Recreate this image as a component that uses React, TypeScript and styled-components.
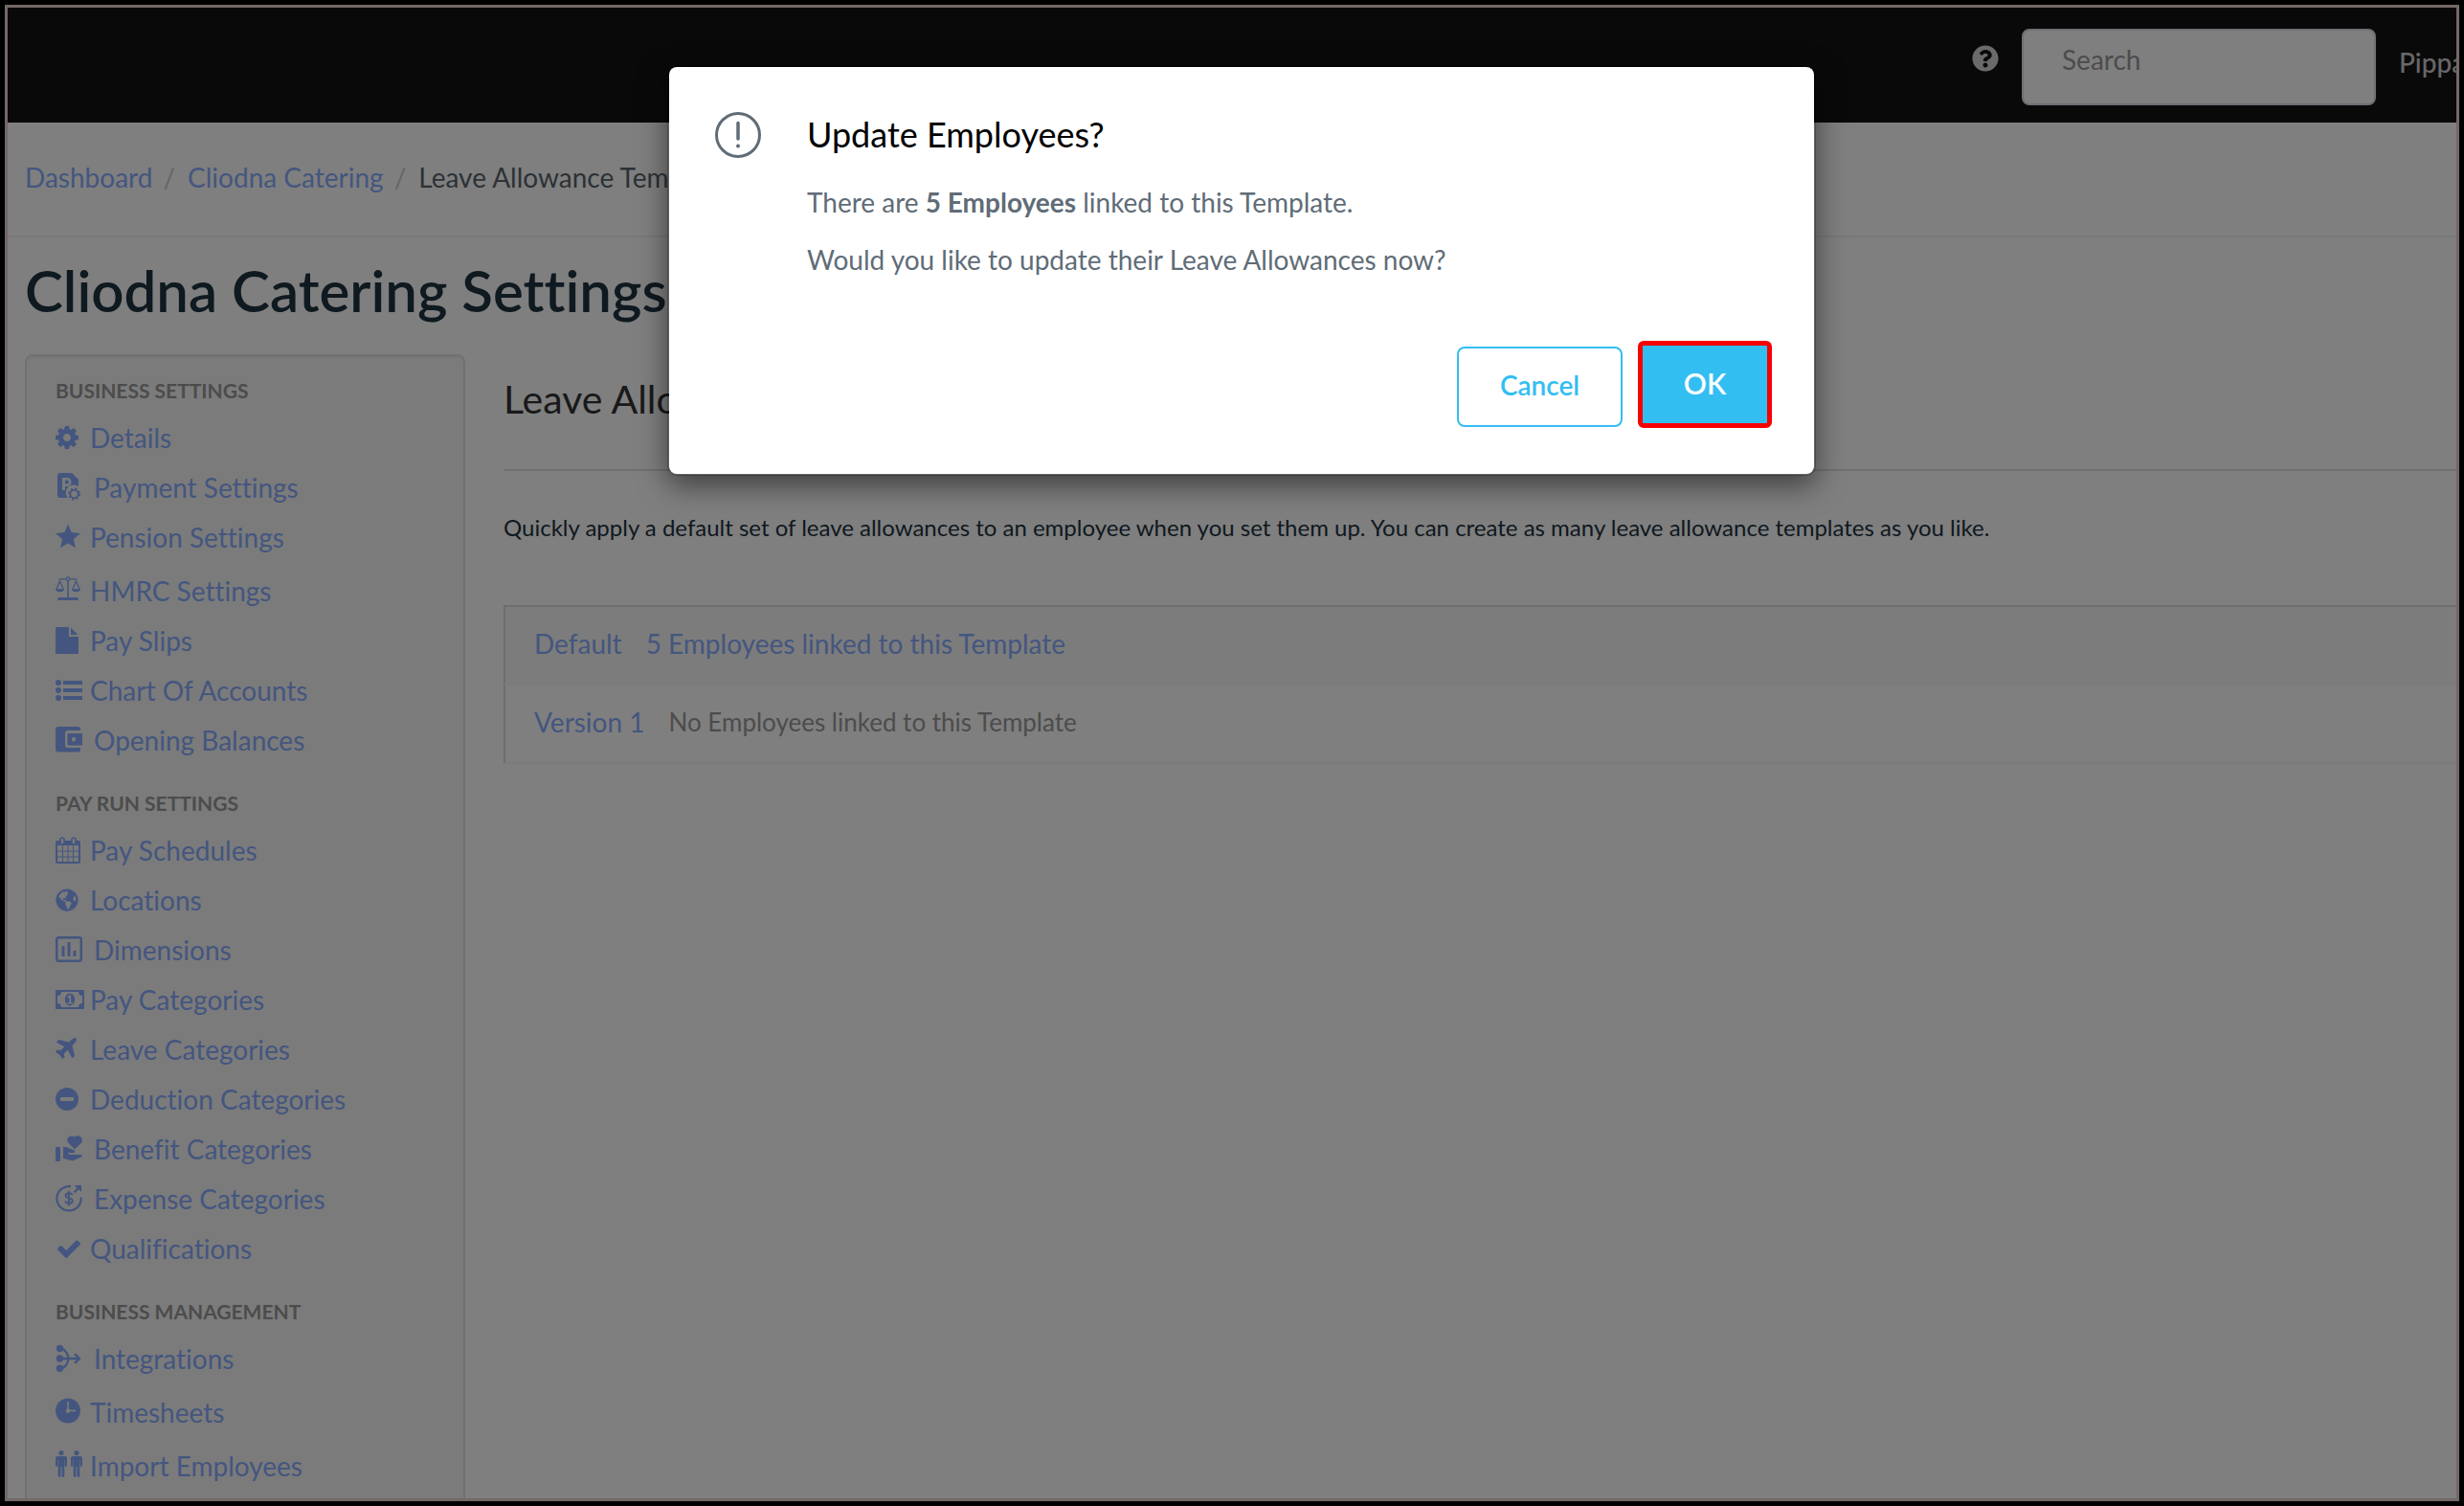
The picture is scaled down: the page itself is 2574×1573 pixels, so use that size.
import React from "react";
import styled, { createGlobalStyle } from "styled-components";
import { FaGlobeAmericas, FaQuestionCircle } from "react-icons/fa";

const link = "#88acff";
const ink = "#1e3240";
const sky = "#33bef2";

const GlobalStyle = createGlobalStyle`
  *, *::before, *::after { box-sizing: border-box; }
  body {
    margin: 0;
    background: #000;
    font-family: Lato, "Open Sans", sans-serif;
    font-size: 28px;
    font-variant-ligatures: none;
  }
  h1, h2, h3, p, ul, ol { margin: 0; padding: 0; font-weight: 400; }
  ul, ol { list-style: none; }
  button, input { font: inherit; }
`;

/* ---------- shell ---------- */

const Frame = styled.div`
  height: 100vh;
  padding: 5px;
  background: #000;
`;

const Screen = styled.div`
  position: relative;
  height: 100%;
  overflow: hidden;
  border: 3px solid #736866;
  background: #fff;
`;

const TopBar = styled.header`
  display: flex;
  justify-content: flex-end;
  align-items: flex-start;
  height: 120px;
  background: #141213;
`;

const HelpButton = styled.button`
  display: flex;
  margin: 39px 24px 0 0;
  padding: 0;
  border: 0;
  background: none;
  color: #d4d4d4;
  font-size: 28px;
`;

const SearchBox = styled.input`
  width: 370px;
  height: 80px;
  margin-top: 22px;
  padding: 0 40px 16px;
  border: 2px solid #d8dfe6;
  border-radius: 8px;
  background: #fff;
  &::placeholder { color: #999; opacity: 1; }
`;

const UserName = styled.span`
  width: 60px;
  margin: 36px 0 0 24px;
  overflow: hidden;
  color: #d0d0d0;
  line-height: 42px;
  font-weight: 500;
  white-space: nowrap;
`;

/* ---------- breadcrumb and title ---------- */

const Crumbs = styled.nav`
  padding: 0 18px 4px;
  border-bottom: 2px solid #f0f3f4;
  line-height: 114px;
  color: #58646c;
  ol { display: flex; }
  li + li::before { content: "/"; padding: 0 13px 0 11px; color: #ccc; }
`;

const TextLink = styled.a`
  color: ${link};
  text-decoration: none;
`;

const PageTitle = styled.h1`
  padding: 20px 18px 32px;
  color: ${ink};
  font-size: 60px;
  font-weight: 600;
  line-height: 70px;
`;

const Columns = styled.div`
  display: grid;
  grid-template-columns: 460px 1fr;
  gap: 40px;
  padding-left: 18px;
`;

/* ---------- side menu ---------- */

const Well = styled.nav`
  padding: 20px 30px 38px;
  border: 2px solid #e3e3e3;
  border-radius: 8px;
  background: #f7f7f7;
  box-shadow: inset 0 2px 2px rgba(0, 0, 0, 0.05);
`;

const Group = styled.section`
  & + & { margin-top: 24px; }
`;

const GroupTitle = styled.h3`
  margin-bottom: 7px;
  color: #999;
  font-size: 21px;
  font-weight: 700;
  line-height: 32px;
`;

const MenuLink = styled.a<{ $loose?: boolean; $inset?: boolean }>`
  display: flex;
  align-items: center;
  gap: ${(p) => (p.$inset ? 8 : 4)}px;
  padding-top: ${(p) => (p.$loose ? 4 : 0)}px;
  color: ${link};
  line-height: 52px;
  text-decoration: none;
  white-space: nowrap;
`;

const Glyph = styled.svg`
  flex: none;
  width: 32px;
  height: 28px;
  overflow: visible;
  fill: currentColor;
`;

/* ---------- main column ---------- */

const SectionTitle = styled.h2`
  padding-bottom: 26px;
  border-bottom: 2px solid #e0e0e0;
  color: #333;
  font-size: 41px;
  line-height: 94px;
`;

const Intro = styled.p`
  margin: 41px 0 63px;
  color: ${ink};
  font-size: 24px;
  line-height: 36px;
`;

const Templates = styled.ul`
  border-top: 2px solid #ddd;
  line-height: 76px;
`;

const TemplateRow = styled.li<{ $striped?: boolean }>`
  display: flex;
  gap: 25px;
  padding: 0 30px 4px;
  border-left: 2px solid #ddd;
  border-bottom: 2px solid #f6f6f6;
  background: ${(p) => (p.$striped ? "#f9f9f9" : "#fff")};
`;

const Muted = styled.span`
  color: #999;
  font-size: 26px;
`;

/* ---------- dialog ---------- */

const Backdrop = styled.div`
  position: absolute;
  inset: 0;
  display: flex;
  justify-content: center;
  align-items: flex-start;
  padding: 60px 0 0 20px;
  background: rgba(0, 0, 0, 0.5);
`;

const Dialog = styled.section`
  display: grid;
  grid-template-columns: 48px 1fr;
  column-gap: 48px;
  width: 1200px;
  padding: 47px 44px 48px 48px;
  border: 2px solid rgba(0, 0, 0, 0.2);
  border-radius: 10px;
  background: #fff;
  background-clip: padding-box;
  box-shadow: 0 10px 30px rgba(0, 0, 0, 0.5);
  color: #606c77;
  line-height: 40px;
`;

const DialogTitle = styled.h2`
  margin-bottom: 28px;
  color: #000;
  font-size: 36px;
  line-height: 46px;
`;

const Message = styled.p`
  & + & { margin-top: 20px; }
`;

const Actions = styled.div`
  grid-column: 1 / -1;
  display: flex;
  justify-content: flex-end;
  align-items: flex-end;
  gap: 16px;
  margin-top: 65px;
`;

const CancelButton = styled.button`
  width: 173px;
  height: 84px;
  margin-bottom: 1px;
  padding: 0 0 4px;
  border: 2px solid ${sky};
  border-radius: 8px;
  background: #fff;
  color: ${sky};
  font-weight: 600;
`;

const OkButton = styled.button`
  width: 140px;
  height: 91px;
  padding: 0 0 4px;
  border: 5px solid #f60000;
  border-radius: 6px;
  background: ${sky};
  color: #fff;
  font-size: 30px;
  font-weight: 600;
`;

/* ---------- icons, drawn on a 32 x 28 grid ---------- */

const line = { fill: "none", stroke: "currentColor" };

const icons: Record<string, React.ReactNode> = {
  cog: (
    <svg x="0" y="3" width="24" height="24" viewBox="128 128 1536 1536">
      <path d="M1152 896q0-106-75-181t-181-75-181 75-75 181 75 181 181 75 181-75 75-181zm512-109v222q0 12-8 23t-20 13l-185 28q-19 54-39 91 35 50 107 138 10 12 10 25t-9 23q-27 37-99 108t-94 71q-12 0-26-9l-138-108q-44 23-91 38-16 136-29 186-7 28-36 28h-222q-14 0-24.5-8.5t-11.5-21.5l-28-184q-49-16-90-37l-141 107q-10 9-25 9-14 0-25-11-126-114-165-168-7-10-7-23 0-12 8-23 15-21 51-66.5t54-70.5q-27-50-41-99l-183-27q-13-2-21-12.5t-8-23.5v-222q0-12 8-23t19-13l186-28q14-46 39-92-40-57-107-138-10-12-10-24 0-10 9-23 26-36 98.5-107.5t94.5-71.5q13 0 26 10l138 107q44-23 91-38 16-136 29-186 7-28 36-28h222q14 0 24.5 8.5t11.5 21.5l28 184q49 16 90 37l142-107q9-9 24-9 13 0 25 10 129 119 165 170 7 8 7 22 0 12-8 23-15 21-51 66.5t-54 70.5q26 50 41 98l183 28q13 2 21 12.5t8 23.5z" />
    </svg>
  ),
  payment: (
    <>
      <path
        fillRule="evenodd"
        d="M5 0H17L24 7V14.2A8.2 8.2 0 0 0 12 25V26H5A3 3 0 0 1 2 23V3A3 3 0 0 1 5 0ZM7 5V18H10V14H12A4.500 4.500 0 0 0 12 5ZM10 7.500H12A2 2 0 0 1 12 11.500H10Z"
      />
      <circle cx="19.5" cy="22" r="4.2" strokeWidth="1.8" {...line} />
      <circle cx="19.5" cy="22" r="5.6" strokeWidth="1.8" strokeDasharray="2.2 2.2" {...line} />
    </>
  ),
  star: <path d="M13 1.5L16.6 10L26 11L18.9 17.2L21 26.2L13 21.5L5 26.2L7.1 17.2L0 11L9.4 10Z" />,
  scale: (
    <>
      <path d="M3.5 2.8H22.5M1 13L4.5 5L8 13M18 13L21.5 5L25 13" strokeWidth="1.3" {...line} />
      <path d="M0 13H9A4.5 3.2 0 0 1 0 13ZM17 13H26A4.5 3.2 0 0 1 17 13ZM12.2 4.5H13.8V22H23L24 25H2L3 22H12.2Z" />
      <circle cx="13" cy="2.8" r="1.8" fill="#f7f7f7" stroke="currentColor" strokeWidth="1.3" />
    </>
  ),
  file: <path d="M1 1H14V11H24V28A1 1 0 0 1 23 29H1A1 1 0 0 1 0 28V2A1 1 0 0 1 1 1ZM16 1.5L23.5 9H16Z" />,
  list: (
    <>
      <circle cx="3" cy="7" r="3" />
      <circle cx="3" cy="15" r="3" />
      <circle cx="3" cy="23" r="3" />
      <path d="M8 5H28V9H8ZM8 13H28V17H8ZM8 21H28V25H8Z" />
    </>
  ),
  wallet: (
    <path
      fillRule="evenodd"
      d="M3 1H23.5A2.5 2.5 0 0 1 26 3.5V5H13A3 3 0 0 0 10 8V20A3 3 0 0 0 13 23H26V25A2.5 2.5 0 0 1 23.5 27.5H3A3 3 0 0 1 0 24.5V4A3 3 0 0 1 3 1ZM13.5 8H28V20.5H13.5A1 1 0 0 1 12.5 19.5V9A1 1 0 0 1 13.5 8ZM19 12A2.2 2.2 0 1 0 19 16.4A2.2 2.2 0 0 0 19 12Z"
    />
  ),
  calendar: (
    <>
      <rect x="1" y="6" width="24" height="22" rx="1" strokeWidth="2" {...line} />
      <path d="M1 5H25V10H1Z" />
      <path d="M7.5 10V28M13 10V28M18.5 10V28M1 16H25M1 22H25" strokeWidth="1" {...line} />
      <rect x="5" y="2" width="4" height="7" rx="2" fill="#f7f7f7" stroke="currentColor" strokeWidth="1.6" />
      <rect x="17" y="2" width="4" height="7" rx="2" fill="#f7f7f7" stroke="currentColor" strokeWidth="1.6" />
    </>
  ),
  globe: <FaGlobeAmericas x="0" y="3" size={24} />,
  chart: (
    <>
      <rect x="1.25" y="2.25" width="25.5" height="24.5" rx="2" strokeWidth="2.5" {...line} />
      <path d="M6.5 11H9.5V22H6.5ZM12.5 7H15.5V22H12.5ZM18.5 16H21.5V22H18.5Z" />
    </>
  ),
  money: (
    <>
      <path
        fillRule="evenodd"
        d="M0 5H30V25H0ZM6 7A4 4 0 0 1 2 11V19A4 4 0 0 1 6 23H24A4 4 0 0 1 28 19V11A4 4 0 0 1 24 7Z"
      />
      <ellipse cx="15" cy="15" rx="5.2" ry="6.5" />
      <path d="M12.8 12.8L15.3 11V18.5M12.5 18.8H17.8" fill="none" stroke="#f7f7f7" strokeWidth="1.6" />
    </>
  ),
  plane: (
    <svg x="0" y="3" width="22" height="22" viewBox="192 128 1408 1408">
      <path d="M1568 160q44 52 12 148t-108 172l-161 161 160 696q5 19-12 33l-128 96q-7 6-19 6-4 0-7-1-15-3-21-16l-279-508-259 259 53 194q5 17-8 31l-96 96q-9 9-23 9h-2q-15-2-24-13l-189-252-252-189q-11-7-13-23-1-13 9-25l96-97q9-9 23-9 6 0 8 1l194 53 259-259-508-279q-14-8-17-24-2-16 9-27l128-128q14-13 30-8l665 159 160-160q76-76 172-108t148 12z" />
    </svg>
  ),
  minus: (
    <path
      fillRule="evenodd"
      d="M12 3A12 12 0 1 1 12 27A12 12 0 0 1 12 3ZM6 13A1 1 0 0 0 5 14V16A1 1 0 0 0 6 17H18A1 1 0 0 0 19 16V14A1 1 0 0 0 18 13Z"
    />
  ),
  benefit: (
    <>
      <path d="M0 13H5V28H0Z" />
      <path d="M8 13H11L20 16.5A2 2 0 0 1 19.5 19.3H15.5L13.5 18.5L13 20L15.5 21H26A2 2 0 0 1 28 23L18 27.5L8 25Z" />
      <path d="M20 15.5L13.8 9.3A4.5 4.5 0 0 1 20 2.6A4.5 4.5 0 0 1 26.5 9.3Z" />
    </>
  ),
  expense: (
    <>
      <path d="M16 2.2A12.7 12.7 0 1 0 26.7 13.5" strokeWidth="2.2" {...line} />
      <path d="M19.5 8.5L25 3" strokeWidth="2.4" {...line} />
      <path d="M20 1H27V8L24.5 5.5L22 3.5Z" />
      <path
        d="M17.6 11.2C17.2 9.8 15.8 9.2 14 9.2C12 9.2 10.6 10.2 10.6 11.8C10.6 15.4 17.8 13.4 17.8 17.2C17.8 19 16.2 20 14 20C12 20 10.6 19.2 10.2 17.6M14 7V22.5"
        strokeWidth="2"
        {...line}
      />
    </>
  ),
  check: (
    <svg x="2" y="6" width="24" height="19" viewBox="121 310 1550 1212">
      <path d="M1671 566q0 40-28 68l-724 724-136 136q-28 28-68 28t-68-28l-136-136-362-362q-28-28-28-68t28-68l136-136q28-28 68-28t68 28l294 295 656-657q28-28 68-28t68 28l136 136q28 28 28 68z" />
    </svg>
  ),
  merge: (
    <>
      <circle cx="4.5" cy="4.5" r="3.7" />
      <circle cx="4.5" cy="15" r="3.7" />
      <circle cx="4.5" cy="25.3" r="3.7" />
      <path d="M4.5 4.5C10 4.5 13 10 13.5 15C13 20 10 25.3 4.5 25.3M4.5 15H25M20 10.2L25 15L20 19.8" strokeWidth="2.4" {...line} />
    </>
  ),
  clock: (
    <>
      <circle cx="13" cy="13.5" r="13" />
      <path d="M13 4V13.5H21" fill="none" stroke="#f7f7f7" strokeWidth="1.5" />
      <circle cx="13" cy="13.5" r="2.2" fill="#f7f7f7" />
    </>
  ),
  people: (
    <>
      {[0, 16].map((x) => (
        <g key={x} transform={`translate(${x} 0)`}>
          <circle cx="6" cy="1.5" r="2.6" />
          <path d="M2 5H10A2 2 0 0 1 12 7V15A1.2 1.2 0 0 1 9.7 15V9H9.3V25.5A1.4 1.4 0 0 1 6.5 25.5V16H5.5V25.5A1.4 1.4 0 0 1 2.7 25.5V9H2.3V15A1.2 1.2 0 0 1 0 15V7A2 2 0 0 1 2 5Z" />
        </g>
      ))}
    </>
  ),
};

type Item = { icon: string; label: string; loose?: boolean; inset?: boolean };

const menu: { title: string; items: Item[] }[] = [
  {
    title: "BUSINESS SETTINGS",
    items: [
      { icon: "cog", label: "Details" },
      { icon: "payment", label: "Payment Settings", inset: true },
      { icon: "star", label: "Pension Settings" },
      { icon: "scale", label: "HMRC Settings", loose: true },
      { icon: "file", label: "Pay Slips" },
      { icon: "list", label: "Chart Of Accounts" },
      { icon: "wallet", label: "Opening Balances", inset: true },
    ],
  },
  {
    title: "PAY RUN SETTINGS",
    items: [
      { icon: "calendar", label: "Pay Schedules" },
      { icon: "globe", label: "Locations" },
      { icon: "chart", label: "Dimensions", inset: true },
      { icon: "money", label: "Pay Categories" },
      { icon: "plane", label: "Leave Categories" },
      { icon: "minus", label: "Deduction Categories" },
      { icon: "benefit", label: "Benefit Categories", inset: true },
      { icon: "expense", label: "Expense Categories", inset: true },
      { icon: "check", label: "Qualifications" },
    ],
  },
  {
    title: "BUSINESS MANAGEMENT",
    items: [
      { icon: "merge", label: "Integrations", inset: true },
      { icon: "clock", label: "Timesheets", loose: true },
      { icon: "people", label: "Import Employees", loose: true },
    ],
  },
];

export default function App() {
  return (
    <Frame>
      <GlobalStyle />
      <Screen>
        <TopBar>
          <HelpButton type="button" aria-label="Help">
            <FaQuestionCircle />
          </HelpButton>
          <SearchBox type="search" aria-label="Search" placeholder="Search" />
          <UserName>Pippa</UserName>
        </TopBar>

        <Crumbs aria-label="Breadcrumb">
          <ol>
            <li><TextLink href="#dashboard">Dashboard</TextLink></li>
            <li><TextLink href="#company">Cliodna Catering</TextLink></li>
            <li>Leave Allowance Templates</li>
          </ol>
        </Crumbs>

        <PageTitle>Cliodna Catering Settings</PageTitle>

        <Columns>
          <Well aria-label="Settings">
            {menu.map((group) => (
              <Group key={group.title}>
                <GroupTitle>{group.title}</GroupTitle>
                <ul>
                  {group.items.map((item) => (
                    <li key={item.label}>
                      <MenuLink href={`#${item.icon}`} $loose={item.loose} $inset={item.inset}>
                        <Glyph viewBox="0 1 32 28" aria-hidden="true">{icons[item.icon]}</Glyph>
                        {item.label}
                      </MenuLink>
                    </li>
                  ))}
                </ul>
              </Group>
            ))}
          </Well>

          <main>
            <SectionTitle>Leave Allowance Templates</SectionTitle>
            <Intro>
              Quickly apply a default set of leave allowances to an employee when you set them up. You can create as
              many leave allowance templates as you like.
            </Intro>
            <Templates>
              <TemplateRow $striped>
                <TextLink href="#default">Default</TextLink>
                <TextLink href="#linked">5 Employees linked to this Template</TextLink>
              </TemplateRow>
              <TemplateRow>
                <TextLink href="#version-1">Version 1</TextLink>
                <Muted>No Employees linked to this Template</Muted>
              </TemplateRow>
            </Templates>
          </main>
        </Columns>

        <Backdrop>
          <Dialog role="dialog" aria-modal="true" aria-labelledby="dialog-title">
            <svg width="48" height="48" viewBox="0 0 48 48" fill="none" stroke="#606c77" strokeWidth="3" aria-hidden="true">
              <circle cx="24" cy="24" r="22.5" />
              <path d="M24 11.5V28" strokeWidth="3.5" strokeLinecap="round" />
              <circle cx="24" cy="35.5" r="2" fill="#606c77" stroke="none" />
            </svg>
            <div>
              <DialogTitle id="dialog-title">Update Employees?</DialogTitle>
              <Message>
                There are <b>5 Employees</b> linked to this Template.
              </Message>
              <Message>Would you like to update their Leave Allowances now?</Message>
            </div>
            <Actions>
              <CancelButton type="button">Cancel</CancelButton>
              <OkButton type="button">OK</OkButton>
            </Actions>
          </Dialog>
        </Backdrop>
      </Screen>
    </Frame>
  );
}
